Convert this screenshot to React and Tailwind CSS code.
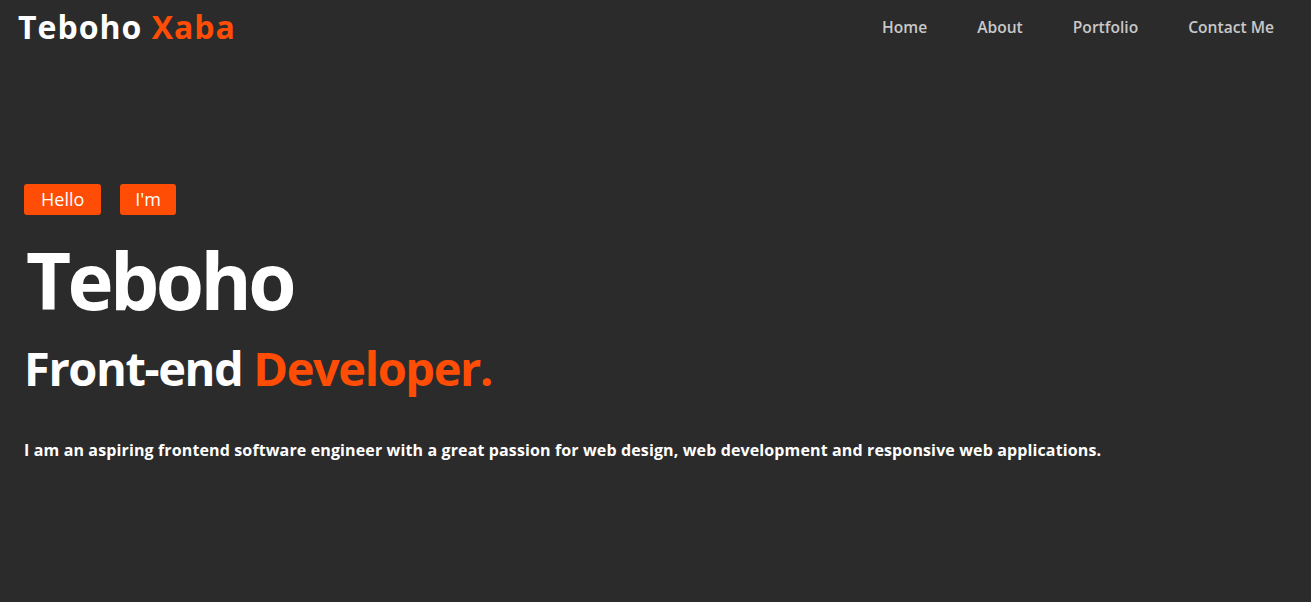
export default function App() {
  return (
    <div className="min-h-[602px] w-full bg-[#2b2b2b] text-white" style={{ fontFamily: '"Open Sans", "Noto Sans", sans-serif' }}>
      <nav className="flex h-[54px] items-center justify-between pl-[18px] pr-[37px]">
        <div className="text-[32px] font-bold leading-none tracking-[1px]">
          Teboho <span className="text-[#ff4d05]">Xaba</span>
        </div>
        <ul className="mt-[2px] flex items-center gap-[50px] text-[15.6px] font-semibold text-[#c8c8c8]">
          <li>Home</li>
          <li>About</li>
          <li>Portfolio</li>
          <li>Contact Me</li>
        </ul>
      </nav>
      <section className="pl-[24px] pt-[130px]">
        <div className="flex gap-[19px]">
          <span className="flex h-[31px] items-center rounded-[3px] bg-[#ff4d05] px-[17px] text-[18px]">Hello</span>
          <span className="flex h-[31px] items-center rounded-[3px] bg-[#ff4d05] px-[15px] text-[18px]">I'm</span>
        </div>
        <h1 className="mt-[20px] pl-[2px] text-[78px] font-bold leading-[90px] tracking-[-3.6px]">Teboho</h1>
        <h2 className="mt-[13px] text-[47px] font-bold leading-[60px] tracking-[-1.4px]">
          Front-end <span className="text-[#ff4d05]">Developer.</span>
        </h2>
        <p className="mt-[40px] text-[16px] font-bold tracking-[0.13px]">
          I am an aspiring frontend software engineer with a great passion for web design, web development and responsive web applications.
        </p>
      </section>
    </div>
  );
}
